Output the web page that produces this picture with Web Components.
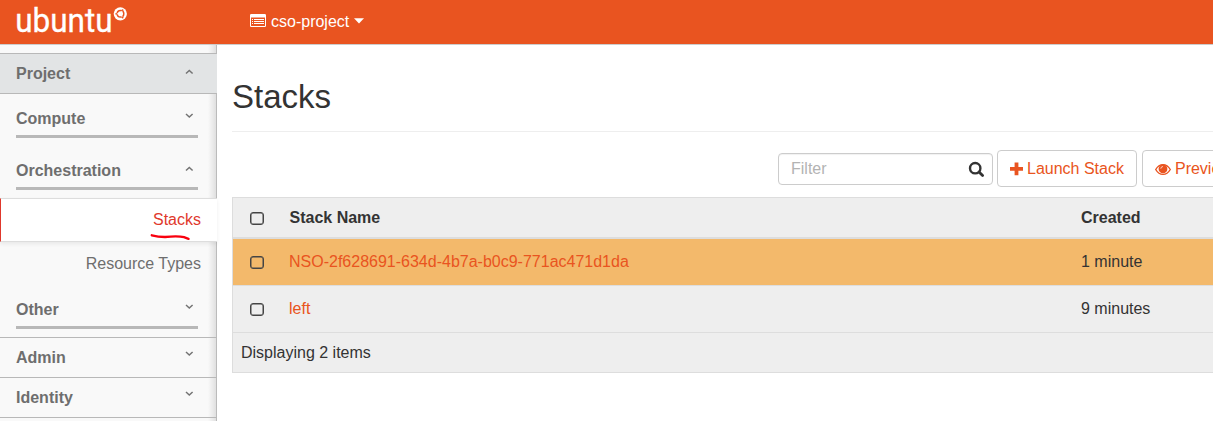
<!DOCTYPE html>
<html lang="en">
<head>
<meta charset="utf-8">
<title>Stacks</title>
<style>
html,body{margin:0;height:100%;overflow:hidden;background:#fff}
body{font:16px/20px "Liberation Sans",Arial,sans-serif;color:#333}
</style>
</head>
<body>
<horizon-app></horizon-app>
<script>
const define=(name,css,html)=>customElements.define(name,class extends HTMLElement{
  constructor(){
    super();
    const t=document.createElement('template');
    t.innerHTML=`<style>*{box-sizing:border-box}${css}</style>${html}`;
    this.attachShadow({mode:'open'}).append(t.content.cloneNode(true));
  }
});

define('top-bar',`
:host{display:flex;height:45px;background:#e95420;border-bottom:1px solid #ccc;color:#fff;box-sizing:border-box}
.brand{display:block;width:250px;height:44px;flex:none}
.proj{display:flex;align-items:center;height:42px}
.proj span{margin:1px 5px 0}`,
`<svg class="brand" viewBox="0 0 250 44"><text x="15.2" y="31.8" font-family="Roboto,sans-serif" font-size="32.5" textLength="97.5" lengthAdjust="spacingAndGlyphs" fill="#fff" stroke="#fff" stroke-width=".3">ubuntu</text>
<circle cx="120.3" cy="13.8" r="6.6" fill="#fff"/><circle cx="120.5" cy="13.8" r="3.3" fill="none" stroke="#e95420" stroke-width="1.5"/>
<path d="M118.4 13.8H115.3M121.5 15.5l1.5 2.7M121.5 12.1l1.5-2.7" stroke="#fff" stroke-width="1"/>
<g fill="#e95420"><circle cx="116.2" cy="13.8" r=".9"/><circle cx="122.6" cy="17.5" r=".9"/><circle cx="122.6" cy="10.1" r=".9"/></g></svg>
<div class="proj"><svg width="16" height="16" viewBox="0 0 16 16"><path fill="#fff" fill-rule="evenodd" d="M1.3 1H14.7Q16 1 16 2.3V12.7Q16 14 14.7 14H1.3Q0 14 0 12.7V2.3Q0 1 1.3 1ZM1 4.5V12.4Q1 13 1.6 13H14.4Q15 13 15 12.4V4.5Z"/><path stroke="#fff" d="M2 6.5h1M4 6.5h10M2 8.5h1M4 8.5h10M2 10.5h1M4 10.5h10"/></svg><span>cso-project</span><svg width="10" height="6"><path d="M0 .3H10L5 5.6Z" fill="#fff"/></svg></div>`);

customElements.define('nav-group',class extends HTMLElement{
  constructor(){
    super();
    const up=this.hasAttribute('open');
    this.attachShadow({mode:'open'}).innerHTML=`<style>
:host{display:flex;box-sizing:border-box;height:40px;padding:0 23px 0 16px;font-weight:bold;color:#6e6e6e;border-bottom:1px solid #b8b8b8}
:host([panel]){height:41px;background:#e2e4e5;border-top:1px solid #b8b8b8}
:host([sub]){height:29px;margin:0 19px 0 16px;padding:0 4px 0 0;border-bottom:3px solid #b8b8b8}
span{flex:1;padding-top:10px}
:host([sub]) span{padding-top:0}
svg{margin-top:13px}
:host([panel]) svg{margin-top:15px}
:host([sub]) svg{margin-top:4px}
:host([sub][open]) svg{margin-top:5px}
</style><span><slot></slot></span><svg width="9" height="6" viewBox="0 0 9 6"><path fill="none" stroke="#747474" stroke-width="1.5" d="${up?'M1 4.5L4.3 1.5L7.6 4.5':'M1 1L4.3 4L7.6 1'}"/></svg>`;
  }
});

define('nav-link',`
:host{display:block;box-sizing:border-box;height:44px;padding:12px 16px 0 0;text-align:right;color:#6e6e6e}
:host([active]){position:relative;padding-top:11px;background:#fff;color:#df382c;border:solid #ddd;border-width:1px 0;border-left:1px solid #df382c;box-shadow:0 2px 4px rgba(0,0,0,.07)}
svg{display:none;position:absolute;left:149px;top:34px}
:host([active]) svg{display:block}`,
`<slot></slot><svg width="43" height="9"><path d="M1.8 2.3Q8 3.8 15 4Q28 2.6 34 4.2L38.5 5.8" fill="none" stroke="#f9000e" stroke-width="2.4" stroke-linecap="round"/></svg>`);

define('side-bar',`
:host{display:block;box-sizing:border-box;width:217px;background:linear-gradient(90deg,transparent 208px,rgba(0,0,0,.1) 216px,#bbb 216px),#f9f9f9;padding-top:8px}
.c{margin-top:15px}.o{margin-top:23px}.r{margin-top:8px}.x{margin-top:14px;margin-bottom:8px}.line{height:1px;background:#b8b8b8}`,
`<nav-group panel open>Project</nav-group>
<nav-group sub class="c">Compute</nav-group>
<nav-group sub open class="o">Orchestration</nav-group>
<nav-link active class="r">Stacks</nav-link><nav-link>Resource Types</nav-link>
<nav-group sub class="x">Other</nav-group><div class="line"></div>
<nav-group>Admin</nav-group><nav-group>Identity</nav-group>`);

define('filter-box',`
:host{display:flex;align-items:center;box-sizing:border-box;width:215px;height:32px;border:1px solid #ccc;border-radius:4px;padding:0 7px 0 12px;color:#b3b3b3;box-shadow:inset 0 1px 1px rgba(0,0,0,.06);flex:none}
span{flex:1}svg{margin-top:2px}`,
`<span><slot></slot></span><svg width="17" height="17" viewBox="0 0 17 17"><g fill="none" stroke="#333" stroke-width="2.4"><circle cx="7.2" cy="7.2" r="5.2"/><path d="M11 11L14.6 14.6" stroke-width="2.8" stroke-linecap="round"/></g></svg>`);

define('action-button',`
:host{display:flex;align-items:center;box-sizing:border-box;height:37px;border:1px solid #ccc;border-radius:4px;padding:0 12px;color:#e95420;white-space:nowrap;flex:none}
span{margin-left:4px}`,
`<slot name="icon"></slot><span><slot></slot></span>`);

define('check-box',`
:host{display:block;box-sizing:border-box;width:14px;height:13px;border:1px solid #444;border-radius:3px;box-shadow:inset 0 0 0 .5px #444}`,``);

define('stack-row',`
:host{display:grid;grid-template-columns:57px 791px 200px;align-items:center;box-sizing:border-box;height:47px;border-bottom:1px solid #ddd}
:host([head]){height:41px;font-weight:bold;border-bottom:2px solid #ddd}
:host([warn]){background:#f3b96b}
check-box{margin:1px 0 0 17px}
:host([head]) check-box{margin-top:2px}
.n{color:#e95420;white-space:nowrap;margin-left:-1px}
:host([head]) .n{color:inherit;margin-left:-.5px}`,
`<check-box></check-box><div class="n"><slot name="name"></slot></div><div><slot name="created"></slot></div>`);

define('stack-table',`
:host{display:block;box-sizing:border-box;border:1px solid #ddd;border-right:0;background:#eee}
.foot{height:39px;padding:10px 8px 9px}`,
`<stack-row head><span slot="name">Stack Name</span><span slot="created">Created</span></stack-row>
<stack-row warn><span slot="name">NSO-2f628691-634d-4b7a-b0c9-771ac471d1da</span><span slot="created">1 minute</span></stack-row>
<stack-row><span slot="name">left</span><span slot="created">9 minutes</span></stack-row>
<div class="foot">Displaying 2 items</div>`);

define('stacks-page',`
:host{display:block;padding-left:15px;min-width:0;overflow:hidden}
h1{margin:0;padding-top:32px;height:87px;border-bottom:1px solid #eee;font-size:33px;line-height:40px;font-weight:normal}
.tools{display:flex;align-items:center;height:37px;margin:18px 0 10px 546px}
.l{margin:0 5px 0 4px}svg{display:block}`,
`<h1>Stacks</h1>
<div class="tools"><filter-box>Filter</filter-box>
<action-button class="l"><svg slot="icon" width="13" height="14" viewBox="0 0 13 14"><path d="M6.5 .5V13.2M0 6.8H13" stroke="#e95420" stroke-width="3.8"/></svg>Launch Stack</action-button>
<action-button><svg slot="icon" width="16" height="14" viewBox="0 0 16 14"><path fill="none" stroke="#e95420" stroke-width="1.4" d="M.7 7.5Q3.6 2.6 8 2.6T15.3 7.5Q12.4 12.4 8 12.4T.7 7.5Z"/><circle cx="8" cy="6.9" r="4.4" fill="#e95420"/><path d="M5.8 6.7Q5.8 4.6 8 4.5" fill="none" stroke="#fff" stroke-width=".7"/></svg>Preview</action-button></div>
<stack-table></stack-table>`);

define('horizon-app',`
:host{display:grid;grid-template:45px 376px / 217px minmax(0,1fr);height:421px;overflow:hidden}
top-bar{grid-column:1 / -1}`,
`<top-bar></top-bar><side-bar></side-bar><stacks-page></stacks-page>`);
</script>
</body>
</html>
